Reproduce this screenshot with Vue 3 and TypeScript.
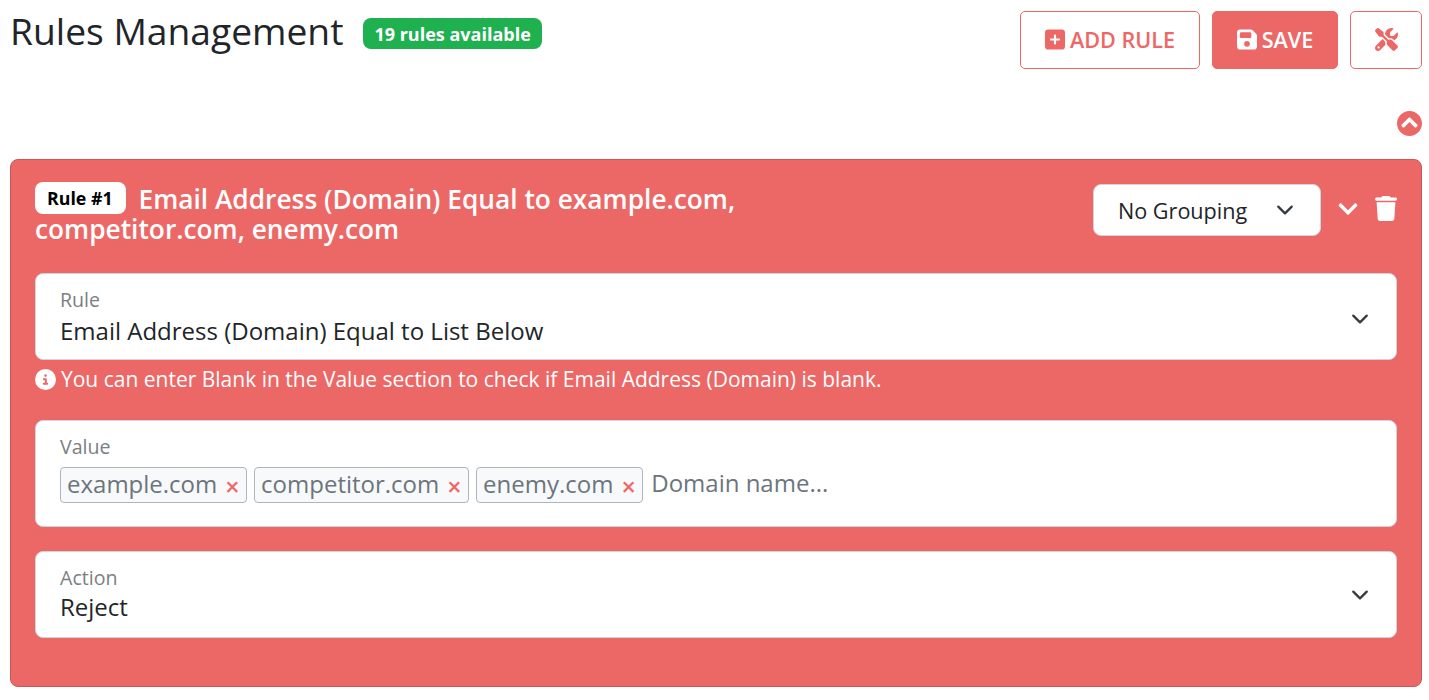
<script setup lang="ts">
const tags = ['example.com', 'competitor.com', 'enemy.com'];
</script>

<template>
  <div class="page">
    <header class="top">
      <div class="heading">
        <h1 class="title">Rules Management</h1>
        <span class="count">19 rules available</span>
      </div>
      <div class="actions">
        <button class="btn btn-add">
          <svg class="btn-icon" viewBox="0 0 448 512"><path fill="currentColor" d="M64 32C28.7 32 0 60.7 0 96V416c0 35.3 28.7 64 64 64H384c35.3 0 64-28.7 64-64V96c0-35.3-28.7-64-64-64H64zM200 344V280H136c-13.3 0-24-10.7-24-24s10.7-24 24-24h64V168c0-13.3 10.7-24 24-24s24 10.7 24 24v64h64c13.3 0 24 10.7 24 24s-10.7 24-24 24H248v64c0 13.3-10.7 24-24 24s-24-10.7-24-24z" /></svg>
          ADD RULE
        </button>
        <button class="btn btn-save">
          <svg class="btn-icon" viewBox="0 0 448 512"><path fill="currentColor" d="M64 32C28.7 32 0 60.7 0 96V416c0 35.3 28.7 64 64 64H384c35.3 0 64-28.7 64-64V173.3c0-17-6.7-33.3-18.7-45.3L352 50.7C340 38.7 323.7 32 306.7 32H64zm0 96c0-17.7 14.3-32 32-32H288c17.7 0 32 14.3 32 32v64c0 17.7-14.3 32-32 32H96c-17.7 0-32-14.3-32-32V128zM224 288a64 64 0 1 1 0 128 64 64 0 1 1 0-128z" /></svg>
          SAVE
        </button>
        <button class="btn btn-tools">
          <svg class="tools-icon" viewBox="0 0 512 512"><path fill="currentColor" d="M78.6 5C69.1-2.4 55.6-1.5 47 7L7 47c-8.5 8.5-9.4 22-2.1 31.6l80 104c4.5 5.9 11.6 9.4 19 9.4h54.1l109 109c-14.7 29-10 65.4 14.3 89.6l112 112c12.5 12.5 32.8 12.5 45.3 0l64-64c12.5-12.5 12.5-32.8 0-45.3l-112-112c-24.2-24.2-60.6-29-89.6-14.3l-109-109V104c0-7.5-3.5-14.5-9.4-19L78.6 5zM19.9 396.1C7.2 408.8 0 426.1 0 444.1C0 481.6 30.4 512 67.9 512c18 0 35.3-7.2 48-19.9L233.7 374.3c-7.8-20.9-9-43.6-3.6-65.1l-61.7-61.7L19.9 396.1zM512 144c0-10.5-1.1-20.7-3.2-30.5c-2.4-11.2-16.1-14.1-24.2-6l-63.9 63.9c-3 3-7.1 4.7-11.3 4.7H352c-8.8 0-16-7.2-16-16V102.6c0-4.2 1.7-8.3 4.7-11.3l63.9-63.9c8.1-8.1 5.2-21.8-6-24.2C388.7 1.1 378.5 0 368 0C288.5 0 224 64.5 224 144l0 .8 85.3 85.3c36-9.1 75.8 .5 104 28.7L429 274.5c49-23 83-72.8 83-130.5zM56 432a24 24 0 1 1 48 0 24 24 0 1 1 -48 0z" /></svg>
        </button>
      </div>
    </header>

    <div class="collapse-row">
      <svg class="collapse-icon" viewBox="8 8 496 496"><path fill="currentColor" d="M8 256C8 119 119 8 256 8s248 111 248 248-111 248-248 248S8 393 8 256zm231-113.9L103.5 277.6c-9.4 9.4-9.4 24.6 0 33.9l17 17c9.4 9.4 24.6 9.4 33.9 0L256 226.9l101.6 101.6c9.4 9.4 24.6 9.4 33.9 0l17-17c9.4-9.4 9.4-24.6 0-33.9L273 142.1c-9.4-9.4-24.6-9.4-34 0z" /></svg>
    </div>

    <section class="rule-card">
      <div class="rule-head">
        <h2 class="rule-title">
          <span class="rule-badge">Rule #1</span>
          Email Address (Domain) Equal to example.com, competitor.com, enemy.com
        </h2>
        <div class="rule-tools">
          <div class="group-select">
            <span>No Grouping</span>
            <svg class="arrow" viewBox="0 0 16 16"><path fill="none" stroke="#343a40" stroke-linecap="round" stroke-linejoin="round" stroke-width="2" d="m2 5 6 6 6-6" /></svg>
          </div>
          <svg class="head-chevron" viewBox="0 0 448 512"><path fill="currentColor" d="M207.029 381.476L12.686 187.132c-9.373-9.373-9.373-24.569 0-33.941l22.667-22.667c9.357-9.357 24.522-9.375 33.901-.04L224 284.505l154.745-154.021c9.379-9.335 24.544-9.317 33.901.04l22.667 22.667c9.373 9.373 9.373 24.569 0 33.941L240.971 381.476c-9.373 9.372-24.569 9.372-33.942 0z" /></svg>
          <svg class="head-trash" viewBox="0 0 448 512"><path fill="currentColor" d="M135.2 17.7L128 32H32C14.3 32 0 46.3 0 64S14.3 96 32 96H416c17.7 0 32-14.3 32-32s-14.3-32-32-32H320l-7.2-14.3C307.4 6.8 296.3 0 284.2 0H163.8c-12.1 0-23.2 6.8-28.6 17.7zM416 128H32L53.2 467c1.6 25.3 22.6 45 47.9 45H346.9c25.3 0 46.3-19.7 47.9-45L416 128z" /></svg>
        </div>
      </div>

      <div class="field field-select">
        <label class="field-label">Rule</label>
        <div class="field-value">Email Address (Domain) Equal to List Below</div>
        <svg class="arrow field-arrow" viewBox="0 0 16 16"><path fill="none" stroke="#343a40" stroke-linecap="round" stroke-linejoin="round" stroke-width="2" d="m2 5 6 6 6-6" /></svg>
      </div>
      <p class="hint">
        <svg class="hint-icon" viewBox="0 0 512 512"><path fill="currentColor" d="M256 512A256 256 0 1 0 256 0a256 256 0 1 0 0 512zM216 336h24V272H216c-13.3 0-24-10.7-24-24s10.7-24 24-24h48c13.3 0 24 10.7 24 24v88h8c13.3 0 24 10.7 24 24s-10.7 24-24 24H216c-13.3 0-24-10.7-24-24s10.7-24 24-24zm40-208a32 32 0 1 1 0 64 32 32 0 1 1 0-64z" /></svg>
        You can enter Blank in the Value section to check if Email Address (Domain) is blank.
      </p>

      <div class="field field-tags">
        <label class="field-label">Value</label>
        <div class="tag-row">
          <span v-for="tag in tags" :key="tag" class="tag">
            {{ tag }}<span class="tag-remove">×</span>
          </span>
          <span class="tag-placeholder">Domain name...</span>
        </div>
      </div>

      <div class="field field-select field-action">
        <label class="field-label">Action</label>
        <div class="field-value">Reject</div>
        <svg class="arrow field-arrow" viewBox="0 0 16 16"><path fill="none" stroke="#343a40" stroke-linecap="round" stroke-linejoin="round" stroke-width="2" d="m2 5 6 6 6-6" /></svg>
      </div>
    </section>
  </div>
</template>

<style scoped>
.page {
  padding: 0 7px 0 10px;
  font-family: 'Open Sans', 'Noto Sans', sans-serif;
  color: #212529;
}

.top {
  display: flex;
  justify-content: space-between;
  align-items: flex-start;
  padding-top: 11px;
}

.heading {
  display: flex;
  align-items: center;
  gap: 20px;
  margin-top: -1px;
}

.title {
  margin: 0;
  font-size: 37.2px;
  font-weight: 500;
  line-height: 42px;
}

.count {
  display: flex;
  align-items: center;
  height: 31px;
  margin-top: 5px;
  padding: 0 11px;
  border-radius: 8px;
  background-color: #1fb14f;
  color: #fff;
  font-size: 18px;
  font-weight: 700;
}

.actions {
  display: flex;
  gap: 12px;
}

.btn {
  display: flex;
  align-items: center;
  justify-content: center;
  gap: 5px;
  height: 58px;
  padding-bottom: 2px;
  border: 1px solid #ec6866;
  border-radius: 5px;
  font-family: inherit;
  font-size: 21.6px;
  font-weight: 600;
  cursor: pointer;
}

.btn-add {
  width: 180px;
  background-color: #fff;
  color: #ec6866;
}

.btn-save {
  width: 126px;
  background-color: #ec6866;
  color: #fff;
}

.btn-tools {
  width: 72px;
  background-color: #fff;
  color: #ec6866;
}

.btn-icon {
  width: 20px;
  height: 23px;
}

.tools-icon {
  width: 23px;
  height: 23px;
}

.collapse-row {
  display: flex;
  justify-content: flex-end;
  padding-top: 42px;
  margin-bottom: 23px;
}

.collapse-icon {
  display: block;
  width: 25px;
  height: 25px;
  color: #ec6866;
}

.rule-card {
  display: flex;
  flex-direction: column;
  padding: 22px 24px 48px;
  border: 1px solid #c95755;
  border-radius: 8px;
  background-color: #ec6866;
  color: #fff;
}

.rule-head {
  display: flex;
  justify-content: space-between;
  align-items: flex-start;
  height: 91px;
}

.rule-title {
  width: 720px;
  margin: 2px 0 0;
  font-size: 26.3px;
  font-weight: 600;
  line-height: 30px;
}

.rule-badge {
  display: inline-block;
  height: 32px;
  margin: -4px 6px -4px 0;
  padding: 0 13px 0 12px;
  border-radius: 8px;
  background-color: #fff;
  color: #000;
  font-size: 17.8px;
  font-weight: 700;
  line-height: 32px;
  vertical-align: 4px;
}

.rule-tools {
  display: flex;
  align-items: flex-start;
  margin-top: 2px;
}

.group-select {
  display: flex;
  justify-content: space-between;
  align-items: center;
  box-sizing: border-box;
  width: 228px;
  height: 52px;
  padding: 0 26px 0 24px;
  border: 1px solid #ced4da;
  border-radius: 8px;
  background-color: #fff;
  color: #212529;
  font-size: 21.6px;
}

.arrow {
  width: 18px;
  height: 18px;
}

.head-chevron {
  width: 20px;
  height: 22px;
  margin: 14px 0 0 17px;
  color: #fff;
}

.head-trash {
  width: 22px;
  height: 25px;
  margin: 12px 0 0 17px;
  color: #fff;
}

.field {
  position: relative;
  box-sizing: border-box;
  border: 1px solid #ced4da;
  border-radius: 8px;
  background-color: #fff;
  color: #212529;
}

.field-select {
  height: 87px;
  padding: 14px 24px 0;
}

.field-label {
  display: block;
  color: #7a7f84;
  font-size: 19.6px;
  line-height: 24px;
}

.field-value {
  margin-top: 3px;
  font-size: 24px;
  line-height: 32px;
}

.field-action .field-value {
  margin-top: 1px;
}

.field-arrow {
  position: absolute;
  top: 36px;
  right: 27px;
}

.field-action .field-arrow {
  top: 34px;
}

.hint {
  display: flex;
  align-items: center;
  gap: 5px;
  height: 24px;
  margin: 7px 0 29px;
  font-size: 21px;
}

.hint-icon {
  width: 21px;
  height: 21px;
  flex: none;
}

.field-tags {
  height: 107px;
  padding: 14px 24px 0;
}

.tag-row {
  display: flex;
  align-items: center;
  gap: 7.5px;
  margin-top: 8px;
}

.tag {
  display: flex;
  align-items: center;
  box-sizing: border-box;
  height: 36px;
  padding: 0 6px 3px;
  border: 1px solid #adb5bd;
  border-radius: 4px;
  background-color: #f8f9fa;
  color: #6c757d;
  font-size: 24px;
}

.tag-remove {
  margin: 5px 0 0 8px;
  color: #ee6865;
  font-size: 25px;
  font-weight: 600;
  line-height: 1;
}

.tag-placeholder {
  margin: -5px 0 0 1px;
  color: #6c757d;
  font-size: 24px;
}

.field-action {
  margin-top: 24px;
}
</style>

<style>
body {
  background-color: #fff;
}
</style>
